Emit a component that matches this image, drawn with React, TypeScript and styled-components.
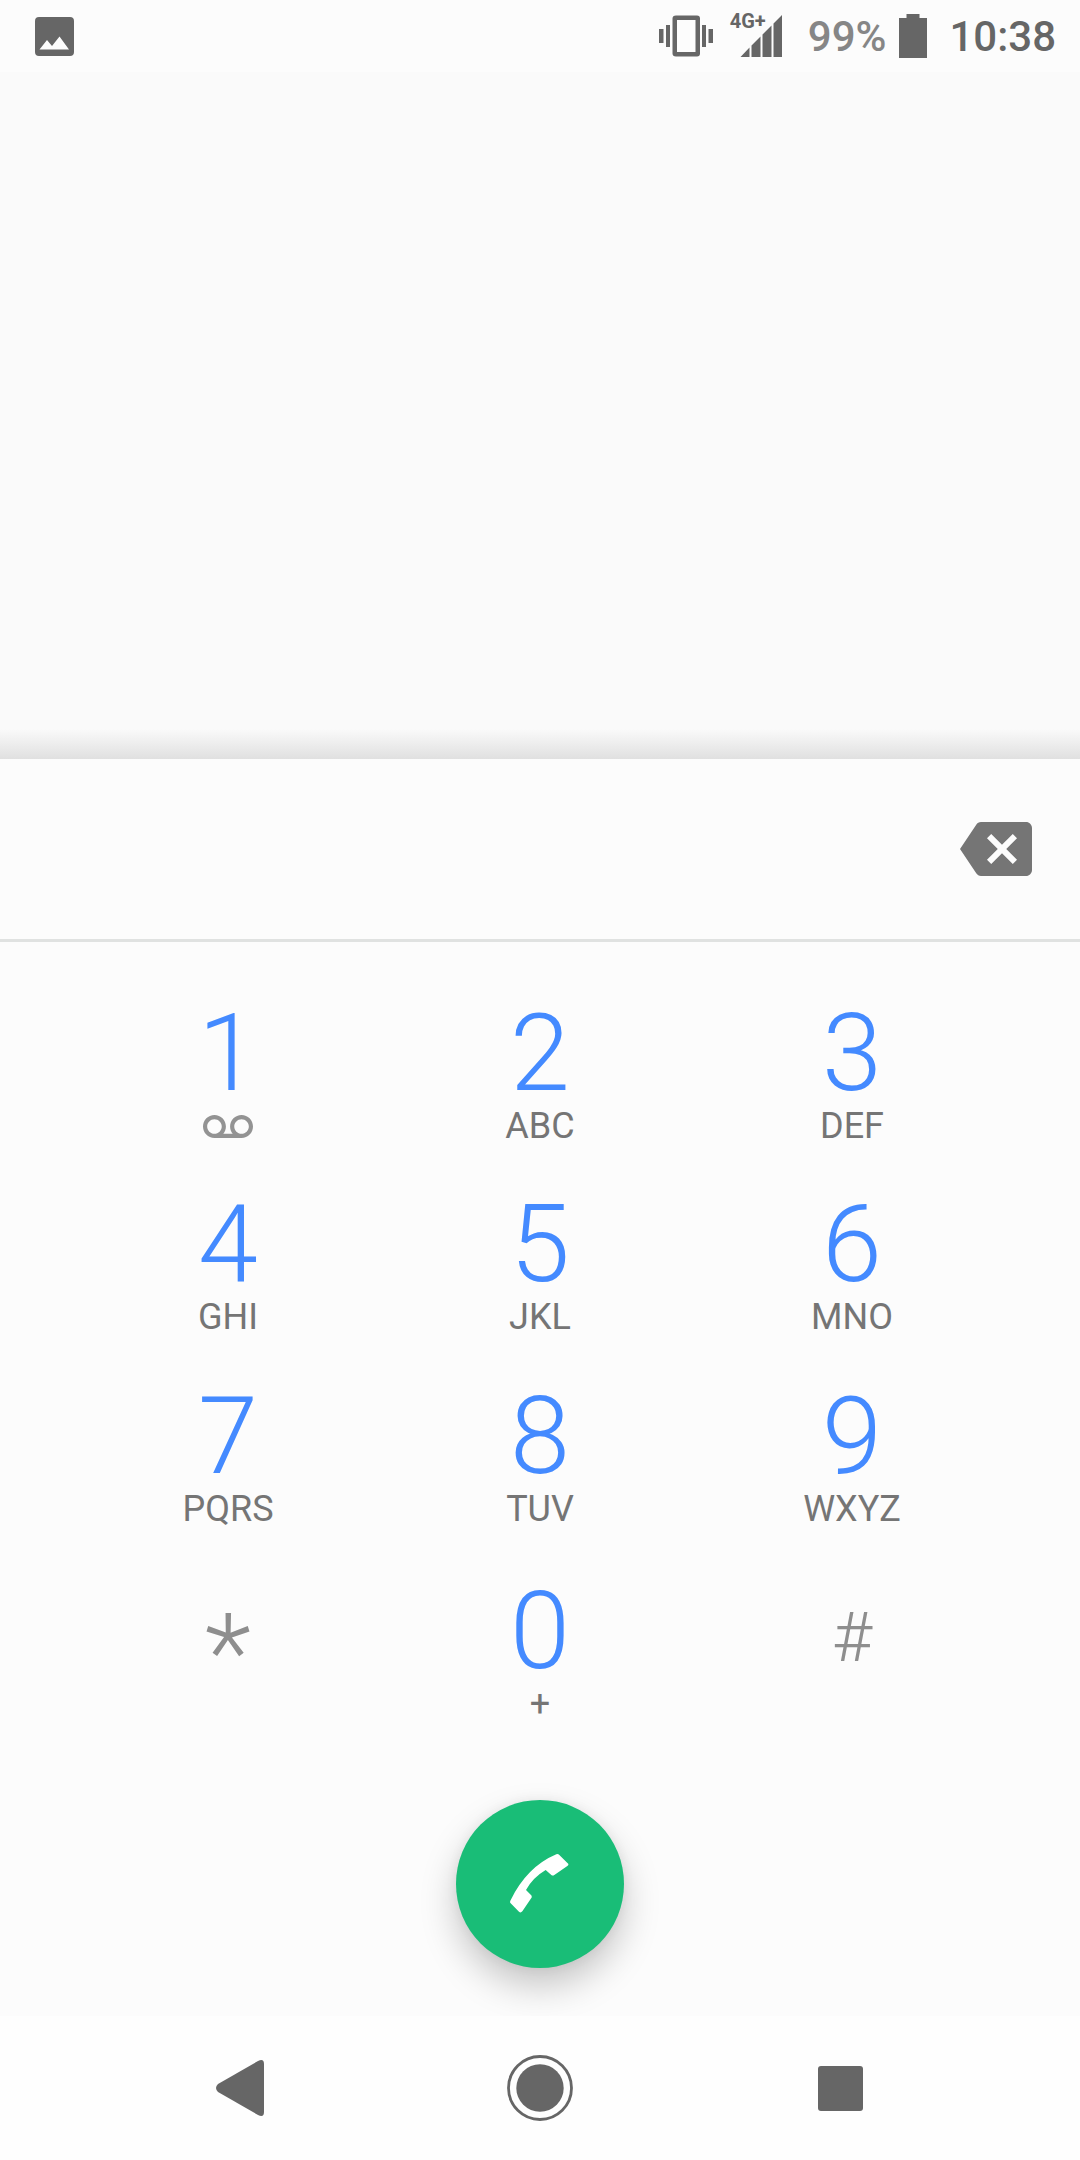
import React, { useState } from "react";
import styled, { createGlobalStyle } from "styled-components";

const GlobalStyle = createGlobalStyle`
  * { box-sizing: border-box; }
  body {
    margin: 0;
    background: #fafafa;
    font-family: Roboto, "Liberation Sans", sans-serif;
  }
  button {
    margin: 0;
    padding: 0;
    border: 0;
    background: none;
    font: inherit;
    color: inherit;
    cursor: pointer;
  }
  svg { display: block; fill: currentColor; }
`;

const Screen = styled.div`
  display: flex;
  flex-direction: column;
  min-height: 100vh;
`;

const StatusBar = styled.header`
  display: flex;
  align-items: center;
  justify-content: space-between;
  height: 72px;
  padding: 0 24px 0 35px;
  background: #fcfcfc;
  color: #666;
`;

const StatusGroup = styled.div`
  display: flex;
  align-items: center;
`;

const Signal = styled.div`
  position: relative;
  margin: 0 26px 0 16px;
`;

const NetworkLabel = styled.span`
  position: absolute;
  top: -4px;
  left: 1px;
  font-size: 20px;
  line-height: 20px;
  font-weight: 700;
`;

const StatusText = styled.span<{ $muted?: boolean }>`
  padding-top: 2px;
  font-size: 42px;
  line-height: 48px;
  font-weight: 500;
  color: ${(p) => (p.$muted ? "#868686" : "#666")};
`;

const BatteryIcon = styled.svg`
  margin: 0 22px 0 13px;
`;

const Results = styled.main`
  display: flex;
  flex: 1;
  flex-direction: column;
  justify-content: flex-end;
  background: #fafafa;
`;

const PanelShadow = styled.div`
  height: 30px;
  background: linear-gradient(#fafafa, #e0e0e0);
`;

const Dialer = styled.section`
  background: #fcfcfc;
`;

const NumberRow = styled.div`
  display: flex;
  align-items: center;
  height: 183px;
  padding: 0 48px;
  border-bottom: 3px solid #e0e2e1;
`;

const NumberInput = styled.input`
  flex: 1;
  min-width: 0;
  height: 120px;
  padding: 0 72px;
  border: 0;
  outline: 0;
  background: none;
  color: #424242;
  font: 400 72px Roboto, "Liberation Sans", sans-serif;
  text-align: center;
`;

const DeleteButton = styled.button`
  color: #757575;
`;

const Keypad = styled.div`
  display: grid;
  grid-template-columns: repeat(3, 1fr);
  grid-template-rows: 191px 192px 195px 192px;
  padding: 33px 72px 0;
`;

const Key = styled.button`
  display: flex;
  flex-direction: column;
  align-items: center;
  padding-top: 24px;
`;

const Digit = styled.span`
  color: #448aff;
  font-size: 108px;
  line-height: 108px;
  font-weight: 300;
`;

const Letters = styled.span`
  display: flex;
  align-items: center;
  height: 38px;
  color: #757575;
  font-size: 36px;
  line-height: 38px;
`;

const VoicemailIcon = styled.svg`
  color: #939393;
`;

const Symbol = styled.span<{ $size: number; $line: number }>`
  color: #8e8e8e;
  font-size: ${(p) => p.$size}px;
  line-height: ${(p) => p.$line}px;
  font-weight: 300;
`;

const CallRow = styled.div`
  display: flex;
  justify-content: center;
  padding: 55px 0 48px;
`;

const CallButton = styled.button`
  display: grid;
  place-items: center;
  width: 168px;
  height: 168px;
  border-radius: 50%;
  background: #19bd77;
  color: #fff;
  box-shadow: 0 18px 36px rgba(0, 0, 0, 0.22), 0 0 12px rgba(0, 0, 0, 0.06);
`;

const NavBar = styled.nav`
  position: relative;
  display: grid;
  grid-template-columns: repeat(3, 1fr);
  height: 144px;
  padding: 0 90px;
  background: #fefefe;
  color: #666;
`;

const NavButton = styled.button`
  display: grid;
  place-items: center;
`;

const keys = [
  { digit: "1", letters: "" },
  { digit: "2", letters: "ABC" },
  { digit: "3", letters: "DEF" },
  { digit: "4", letters: "GHI" },
  { digit: "5", letters: "JKL" },
  { digit: "6", letters: "MNO" },
  { digit: "7", letters: "PQRS" },
  { digit: "8", letters: "TUV" },
  { digit: "9", letters: "WXYZ" },
  { digit: "*", size: 108, line: 152 },
  { digit: "0", letters: "+" },
  { digit: "#", size: 69, line: 121 },
];

export default function App() {
  const [number, setNumber] = useState("");

  return (
    <Screen>
      <GlobalStyle />
      <StatusBar>
        <svg width="39" height="39" viewBox="0 0 39 39" aria-hidden="true">
          <path
            fillRule="evenodd"
            d="M4 0H35Q39 0 39 4V35Q39 39 35 39H4Q0 39 0 35V4Q0 0 4 0ZM4.500 32.500H34L24.500 19.500L17 29L12 23Z"
          />
        </svg>
        <StatusGroup>
          <svg width="54" height="42" viewBox="0 0 54 42" aria-hidden="true">
            <path
              fillRule="evenodd"
              d="M17 0.500H38Q41 0.500 41 3.500V38.500Q41 41.500 38 41.500H17Q13.500 41.500 13.500 38.500V3.500Q13.500 0.500 17 0.500ZM18 5V37H36.500V5Z"
            />
            <path d="M0 14H4.500V28H0ZM7 10H11V32H7ZM43 10H47V32H43ZM49.500 14H54V28H49.500Z" />
          </svg>
          <Signal>
            <svg width="53" height="42" viewBox="0 0 53 42" aria-hidden="true">
              <path d="M11.500 42L20.500 32.500V42ZM22.500 30.500L31.500 21.500V42H22.500ZM33.500 19.500L42.500 10.500V42H33.500ZM44.500 8.500L53 0V42H44.500Z" />
            </svg>
            <NetworkLabel>4G+</NetworkLabel>
          </Signal>
          <StatusText $muted>99%</StatusText>
          <BatteryIcon width="28" height="44" viewBox="0 0 28 44" aria-hidden="true">
            <path d="M7.500 0H20.500V4H28V44H0V4H7.500Z" />
          </BatteryIcon>
          <StatusText>10:38</StatusText>
        </StatusGroup>
      </StatusBar>

      <Results>
        <PanelShadow />
      </Results>

      <Dialer>
        <NumberRow>
          <NumberInput
            type="tel"
            aria-label="Phone number"
            value={number}
            onChange={(e) => setNumber(e.target.value)}
          />
          <DeleteButton aria-label="Backspace" onClick={() => setNumber(number.slice(0, -1))}>
            <svg width="72" height="72" viewBox="0 0 24 24">
              <path d="M22 3H7c-.69 0-1.230.350-1.590.880L0 12l5.410 8.110c.360.530.900.890 1.590.890h15c1.100 0 2-.900 2-2V5c0-1.100-.900-2-2-2zm-3 12.590L17.590 17 14 13.410 10.410 17 9 15.590 12.590 12 9 8.410 10.410 7 14 10.590 17.590 7 19 8.410 15.410 12 19 15.590z" />
            </svg>
          </DeleteButton>
        </NumberRow>

        <Keypad>
          {keys.map((k) => (
            <Key key={k.digit} onClick={() => setNumber(number + k.digit)}>
              {k.size ? (
                <Symbol $size={k.size} $line={k.line}>
                  {k.digit}
                </Symbol>
              ) : (
                <>
                  <Digit>{k.digit}</Digit>
                  <Letters>
                    {k.letters || (
                      <VoicemailIcon width="50" height="23" viewBox="0 6 24 11" aria-label="Voicemail">
                        <path d="M18.500 6C15.460 6 13 8.460 13 11.500c0 1.330.470 2.550 1.260 3.500H9.740c.790-.950 1.260-2.170 1.260-3.500C11 8.460 8.540 6 5.500 6S0 8.460 0 11.500 2.460 17 5.500 17h13c3.040 0 5.500-2.460 5.500-5.500S21.540 6 18.500 6zm-13 9C3.570 15 2 13.430 2 11.500S3.570 8 5.500 8 9 9.570 9 11.500 7.430 15 5.500 15zm13 0c-1.930 0-3.500-1.570-3.500-3.500S16.570 8 18.500 8 22 9.570 22 11.500 20.430 15 18.500 15z" />
                      </VoicemailIcon>
                    )}
                  </Letters>
                </>
              )}
            </Key>
          ))}
        </Keypad>

        <CallRow>
          <CallButton aria-label="Call">
            <svg width="60" height="60" viewBox="240 251 180 180">
              <path d="M241 391Q291 289 379 252Q384 250 388 254L413 279Q418 283 412 287L373 314Q368 317 364 314L347 299Q308 322 288 359L303 374Q307 378 304 383L277 423Q272 429 267 424L242 399Q239 396 241 391Z" />
            </svg>
          </CallButton>
        </CallRow>
      </Dialer>

      <NavBar>
        <NavButton aria-label="Back">
          <svg width="48" height="56" viewBox="0 0 48 56">
            <path d="M2 24L42 1Q48 -2 48 4V52Q48 58 42 55L2 32Q-2 28 2 24Z" />
          </svg>
        </NavButton>
        <NavButton aria-label="Home">
          <svg width="66" height="66" viewBox="0 0 66 66">
            <circle cx="33" cy="33" r="31.500" fill="none" stroke="currentColor" strokeWidth="2.800" />
            <circle cx="33" cy="33" r="23.700" />
          </svg>
        </NavButton>
        <NavButton aria-label="Recent apps">
          <svg width="45" height="45" viewBox="0 0 45 45">
            <rect width="45" height="45" rx="3" />
          </svg>
        </NavButton>
      </NavBar>
    </Screen>
  );
}
